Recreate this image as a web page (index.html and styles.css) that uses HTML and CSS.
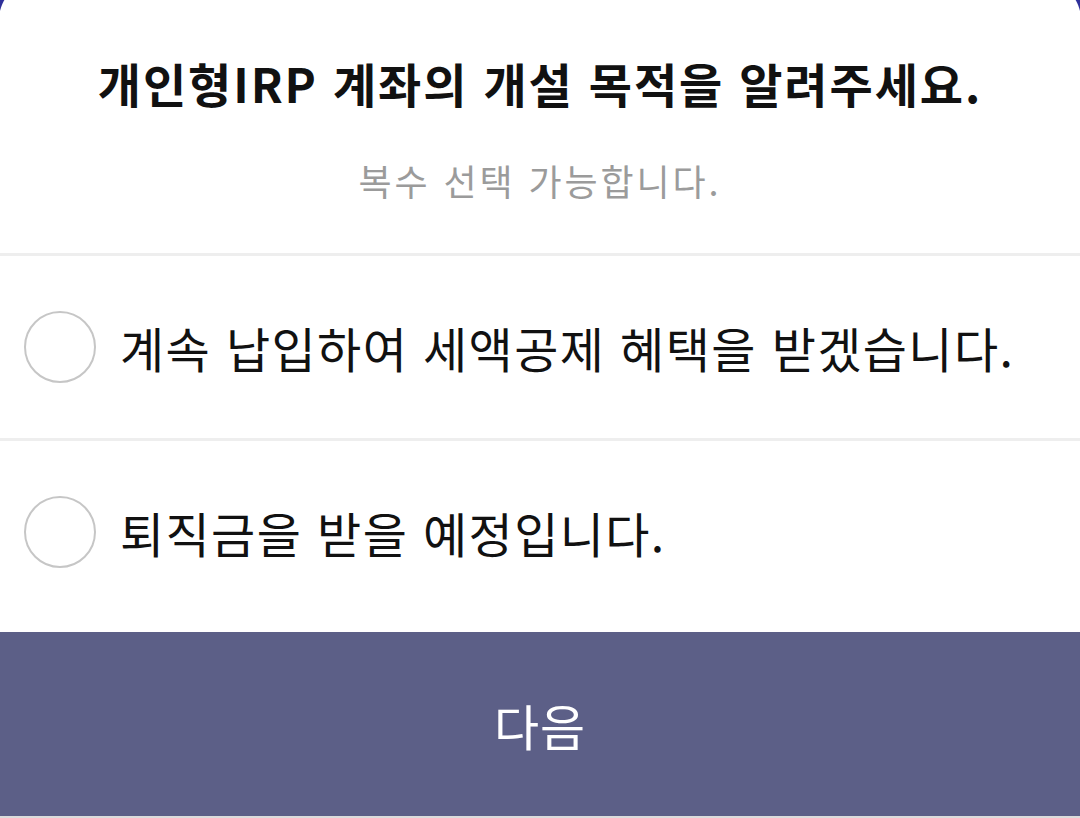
FILE: index.html
```html
<!DOCTYPE html>
<html lang="ko">
<head>
  <meta charset="UTF-8" />
  <meta name="viewport" content="width=device-width, initial-scale=1.0"/>
  <title>개인형IRP 개설 목적</title>
  <link rel="stylesheet" href="styles.css">
</head>
<body>
  <div class="sheet">
    <div class="sheet-head">
      <h1>개인형IRP 계좌의 개설 목적을 알려주세요.</h1>
      <p class="hint">복수 선택 가능합니다.</p>
    </div>

    <!-- 목적 선택 -->
    <ul class="options">
      <li class="option">
        <span class="check"></span>
        <span class="label">계속 납입하여 세액공제 혜택을 받겠습니다.</span>
      </li>
      <li class="option">
        <span class="check"></span>
        <span class="label">퇴직금을 받을 예정입니다.</span>
      </li>
    </ul>

    <button class="next-btn">다음</button>
  </div>
</body>
</html>
```

FILE: styles.css
```css
html, body {
  height: 100%;
}

body {
  margin: 0;
  background: #2f309a;
  font-family: "Noto Sans CJK KR", "Noto Sans", sans-serif;
  color: #111;
  overflow: hidden;
}

.sheet {
  margin: -20px -1px 0;
  background: #fff;
  border-radius: 40px 40px 0 0;
  display: flex;
  flex-direction: column;
  border-bottom: 2px solid #dcdcdc;
}

.sheet-head {
  padding-top: 20px;
  height: 253px;
  border-bottom: 3px solid #eeeeee;
  text-align: center;
}

h1 {
  margin: 0;
  padding-top: 53px;
  font-size: 47px;
  font-weight: 700;
  line-height: 60px;
  letter-spacing: 1.9px;
}

.hint {
  margin: 0;
  padding-top: 42px;
  font-size: 36px;
  line-height: 50px;
  letter-spacing: 2.9px;
  color: #9b9b9b;
}

.options {
  list-style: none;
  margin: 0;
  padding: 0 0 9px;
}

.option {
  display: flex;
  align-items: center;
  height: 182px;
  padding-left: 25px;
  gap: 24px;
}

.option + .option {
  border-top: 3px solid #eeeeee;
}

.check {
  width: 68px;
  height: 68px;
  border: 2px solid #c6c6c6;
  border-radius: 50%;
  flex-shrink: 0;
}

.label {
  font-size: 48px;
  line-height: 60px;
  letter-spacing: 1.4px;
  color: #111;
}

.next-btn {
  height: 184px;
  border: none;
  background: #5c5f87;
  color: #fff;
  font-family: inherit;
  font-size: 49px;
  letter-spacing: 1px;
  padding: 0;
}
```
